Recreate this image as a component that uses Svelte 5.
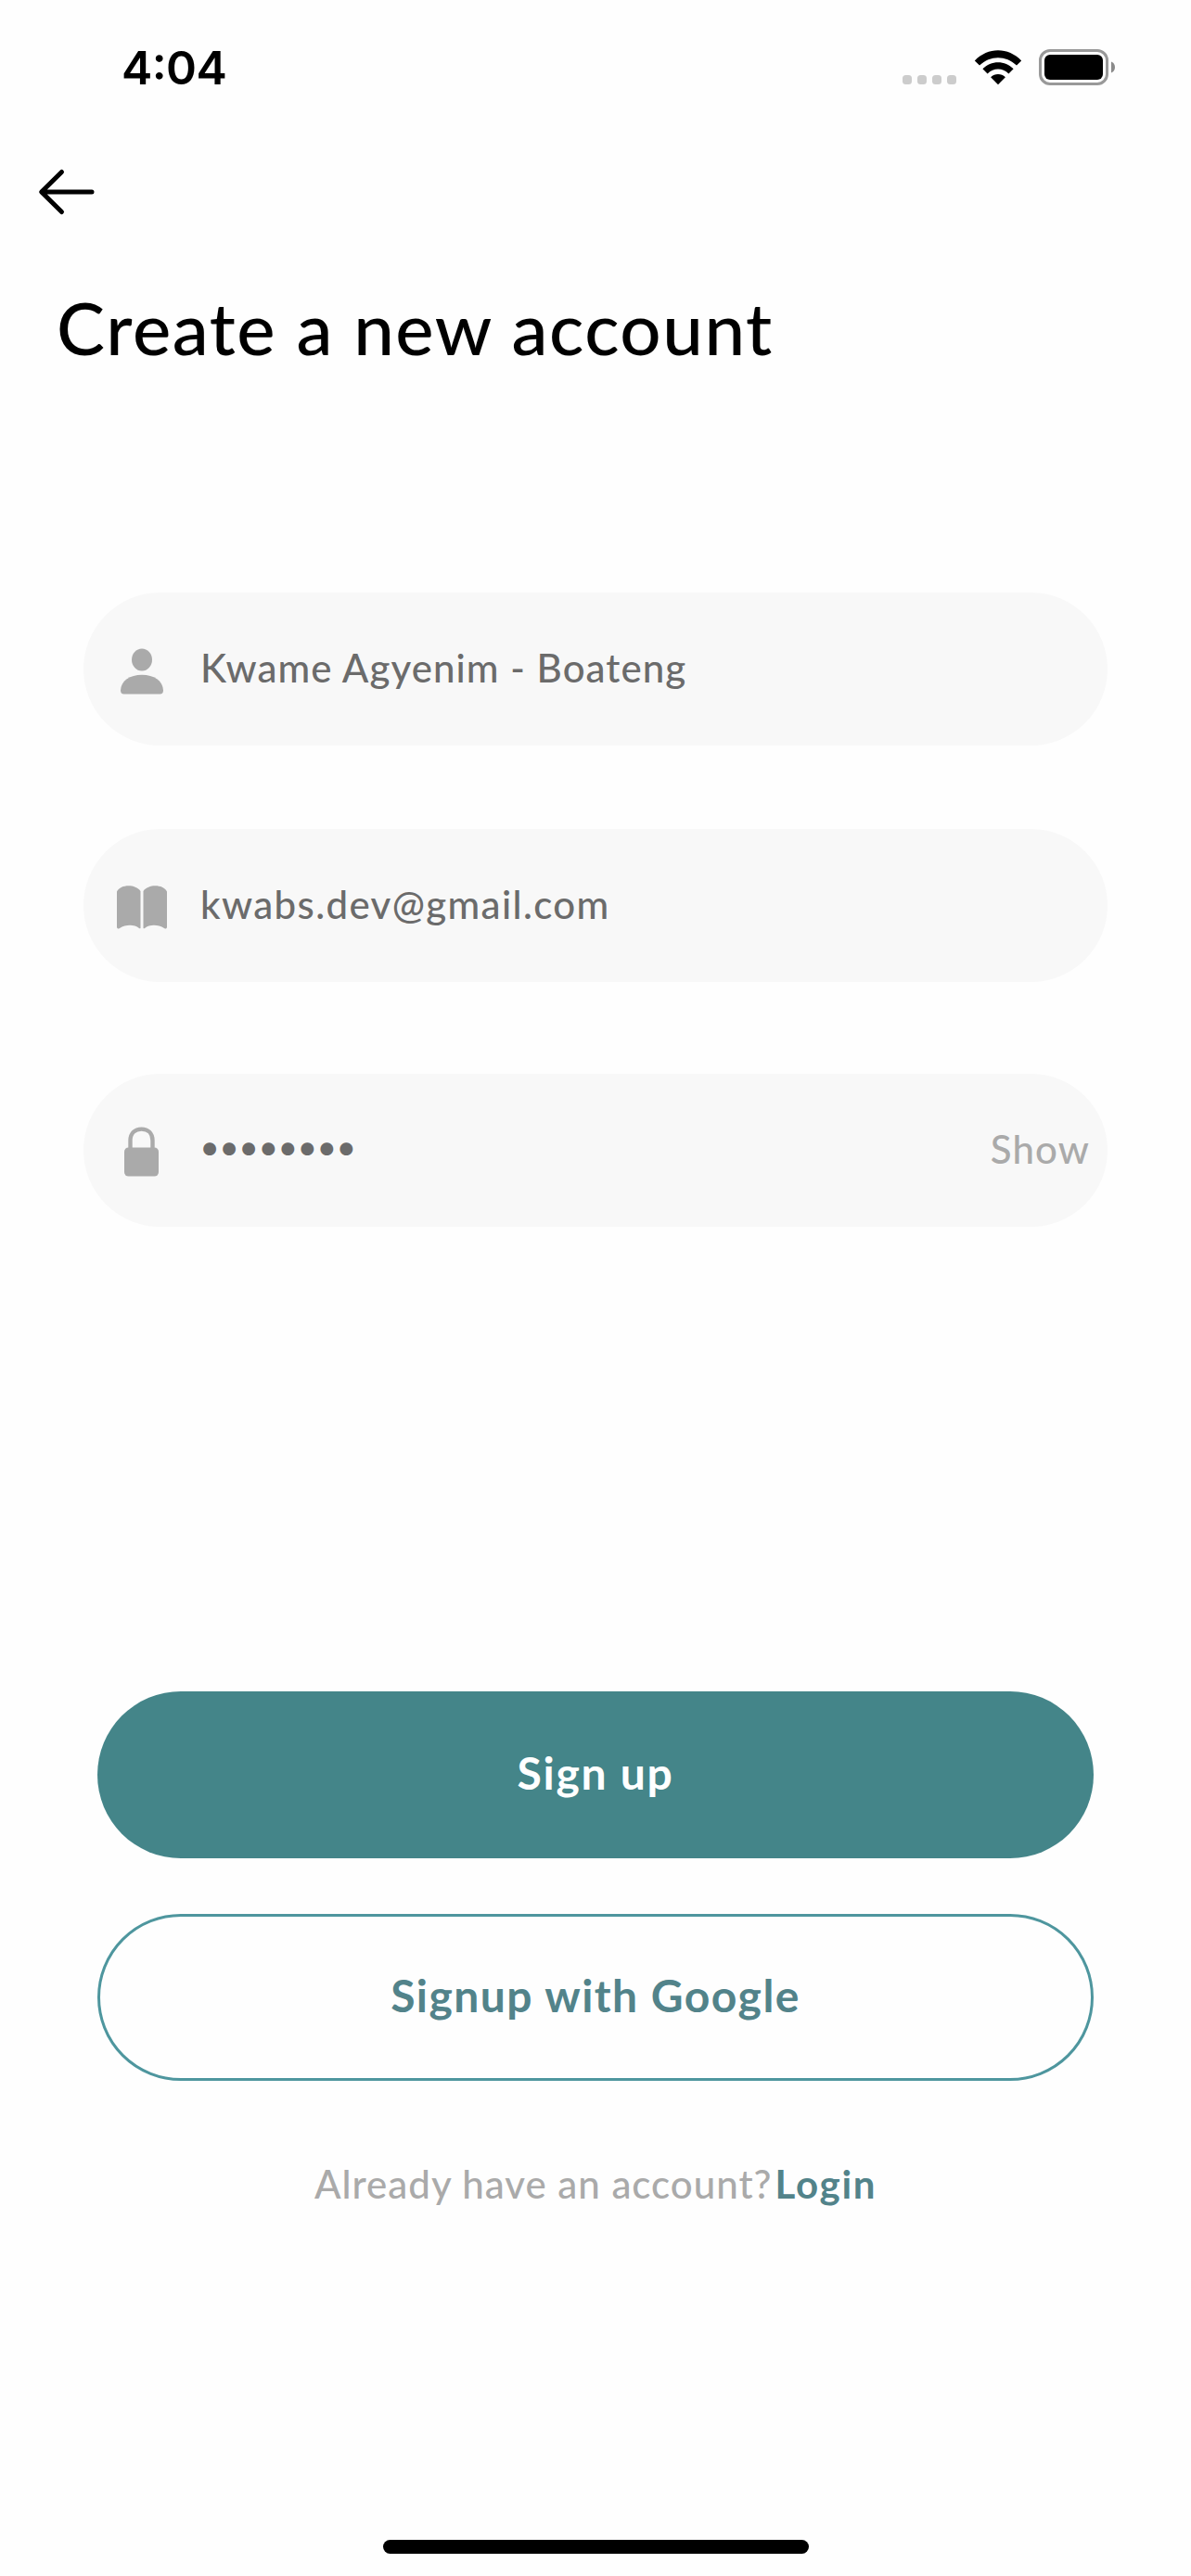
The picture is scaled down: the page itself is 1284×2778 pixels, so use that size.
<script>
  let name = $state('Kwame Agyenim - Boateng');
  let email = $state('kwabs.dev@gmail.com');
  const mask = '•'.repeat(8);
</script>

<main class="screen">
  <header class="status">
    <span class="time">4:04</span>
    <div class="indicators">
      <div class="signal"><i></i><i></i><i></i><i></i></div>
      <svg class="wifi" width="52" height="38" viewBox="0 0 52 38">
        <path d="M.8 11.6C15-3.4 37-3.4 51.2 11.6L46 16.6C34.500 5.400 17.500 5.400 6 16.600Z" />
        <path d="M9.400 20.300C18.500 10.800 33.500 10.800 42.600 20.300L37.400 25.400C31 18.800 21 18.800 14.600 25.400Z" />
        <path d="M18.100 29.200C22.500 25 29.500 25 33.900 29.200L26 37.200Z" />
      </svg>
      <svg class="battery" width="84" height="40" viewBox="0 0 84 40">
        <rect x="1.500" y="1.500" width="72" height="36" rx="10.500" fill="none" stroke="#999" stroke-width="3" />
        <rect x="6" y="6" width="63" height="27" rx="6" fill="#000" />
        <path d="M78 13.500C80.600 14.500 82 16.800 82 19.500S80.600 24.500 78 25.500Z" fill="#8a8a8a" />
      </svg>
    </div>
  </header>

  <button class="back" aria-label="Back">
    <svg width="60" height="50" viewBox="0 0 60 50">
      <path d="M24.500 3.500L2.700 25L24.500 46.500M3.500 25H57" />
    </svg>
  </button>

  <h1>Create a new account</h1>

  <form>
    <div class="field">
      <svg class="icon" width="54" height="54" viewBox="0 0 54 54">
        <ellipse cx="27" cy="16.500" rx="11" ry="12" />
        <path d="M4 49.500C4.500 39 14 32.800 27 32.800S49.500 39 50 49.500Q50 53.500 46.500 53.500H7.500Q4 53.500 4 49.500Z" />
      </svg>
      <span class="value name">{name}</span>
    </div>
    <div class="field">
      <svg class="icon" width="54" height="54" viewBox="0 0 54 54">
        <path d="M0 11.500C4 3.500 20 3.300 25.500 11V50.700Q25 51.600 24 50.900C19 46.600 9.500 46.600 3 50.900Q.3 52.300 0 50Z" />
        <path d="M54 11.500C50 3.500 34 3.300 28.500 11V50.700Q29 51.600 30 50.900C35 46.600 44.500 46.600 51 50.900Q53.700 52.300 54 50Z" />
      </svg>
      <span class="value email">{email}</span>
    </div>
    <div class="field password">
      <svg class="icon" width="54" height="54" viewBox="0 0 54 54">
        <rect x="8" y="23.500" width="37" height="31" rx="4.500" />
        <path class="shackle" d="M14.500 25V16C14.500 8 19.500 3.600 26.500 3.600S38.500 8 38.500 16V25" />
      </svg>
      <span class="mask">{mask}</span>
      <span class="show">Show</span>
    </div>
  </form>

  <div class="actions">
    <button class="pill solid">Sign up</button>
    <button class="pill outline">Signup with Google</button>
  </div>

  <p class="footer"><span class="ask">Already have an account?</span><a class="login" href="#login">Login</a></p>

  <div class="home"></div>
</main>

<style>
  :global(body) {
    background: #fff;
  }
  .screen {
    box-sizing: border-box;
    width: 1284px;
    height: 2778px;
    display: flex;
    flex-direction: column;
    font-family: Lato, sans-serif;
    background: #fefefe;
    overflow: hidden;
  }
  svg {
    display: block;
    flex: none;
    overflow: visible;
  }
  button {
    font: inherit;
    border: 0;
    margin: 0;
    background: none;
  }
  .status {
    display: flex;
    justify-content: space-between;
    align-items: flex-start;
    height: 103px;
    padding: 43px 80px 0 131px;
    box-sizing: border-box;
  }
  .time {
    font: 600 50px/60px Inter, sans-serif;
    letter-spacing: -0.6px;
    font-feature-settings: 'case';
  }
  .indicators {
    display: flex;
    align-items: flex-start;
    padding-top: 10px;
  }
  .signal {
    display: flex;
    gap: 6px;
    padding: 28px 19px 0 0;
  }
  .signal i {
    width: 10px;
    height: 10px;
    border-radius: 3.5px;
    background: #ccc;
  }
  .wifi {
    margin: 1px 18px 0 0;
  }
  .back {
    align-self: flex-start;
    margin: 79px 0 0 42px;
    padding: 0;
  }
  .back path {
    fill: none;
    stroke: #000;
    stroke-width: 5;
    stroke-linecap: round;
    stroke-linejoin: round;
  }
  h1 {
    margin: 74px 0 0 61px;
    font-size: 78px;
    font-weight: 500;
    line-height: 94px;
    letter-spacing: 1.54px;
    color: #000;
  }
  form {
    display: flex;
    flex-direction: column;
    gap: 90px;
    margin: 239px 90px 0;
  }
  .field {
    box-sizing: border-box;
    height: 165px;
    border-radius: 83px;
    background: #f8f8f8;
    display: flex;
    align-items: center;
    padding: 0 19px 0 36px;
    font-size: 42px;
    font-weight: 500;
    line-height: 50px;
    color: #6b6b6b;
  }
  .password {
    margin-top: 9px;
  }
  .icon {
    fill: #aaa;
    margin-right: 36px;
  }
  .shackle {
    fill: none;
    stroke: #aaa;
    stroke-width: 4.4;
  }
  .value {
    padding-bottom: 4px;
  }
  .name {
    letter-spacing: 1.06px;
  }
  .email {
    letter-spacing: 1.36px;
  }
  .mask {
    font: 600 44px/50px Inter, sans-serif;
    letter-spacing: -1.1px;
    margin-left: -1px;
    padding-bottom: 9px;
  }
  .show {
    margin-left: auto;
    padding-bottom: 4px;
    letter-spacing: 1.1px;
    color: #aaa;
  }
  .actions {
    display: flex;
    flex-direction: column;
    gap: 60px;
    margin: 501px 105px 0;
  }
  .pill {
    box-sizing: border-box;
    height: 180px;
    border-radius: 90px;
    padding: 0 0 6px;
    font-size: 48px;
    font-weight: 700;
  }
  .solid {
    background: #448589;
    color: #fff;
    letter-spacing: 1.75px;
  }
  .outline {
    border: 3px solid #4e969e;
    color: #52838a;
    letter-spacing: 1.45px;
  }
  .footer {
    display: flex;
    justify-content: center;
    gap: 3px;
    margin: 86px 0 0;
    font-size: 42px;
    line-height: 50px;
  }
  .ask {
    color: #aaa;
    font-weight: 500;
    letter-spacing: 1px;
  }
  .login {
    color: #52838a;
    font-weight: 700;
    letter-spacing: 1.67px;
    text-decoration: none;
  }
  .home {
    width: 459px;
    height: 15px;
    border-radius: 8px;
    background: #000;
    margin: auto auto 24px;
  }
</style>
